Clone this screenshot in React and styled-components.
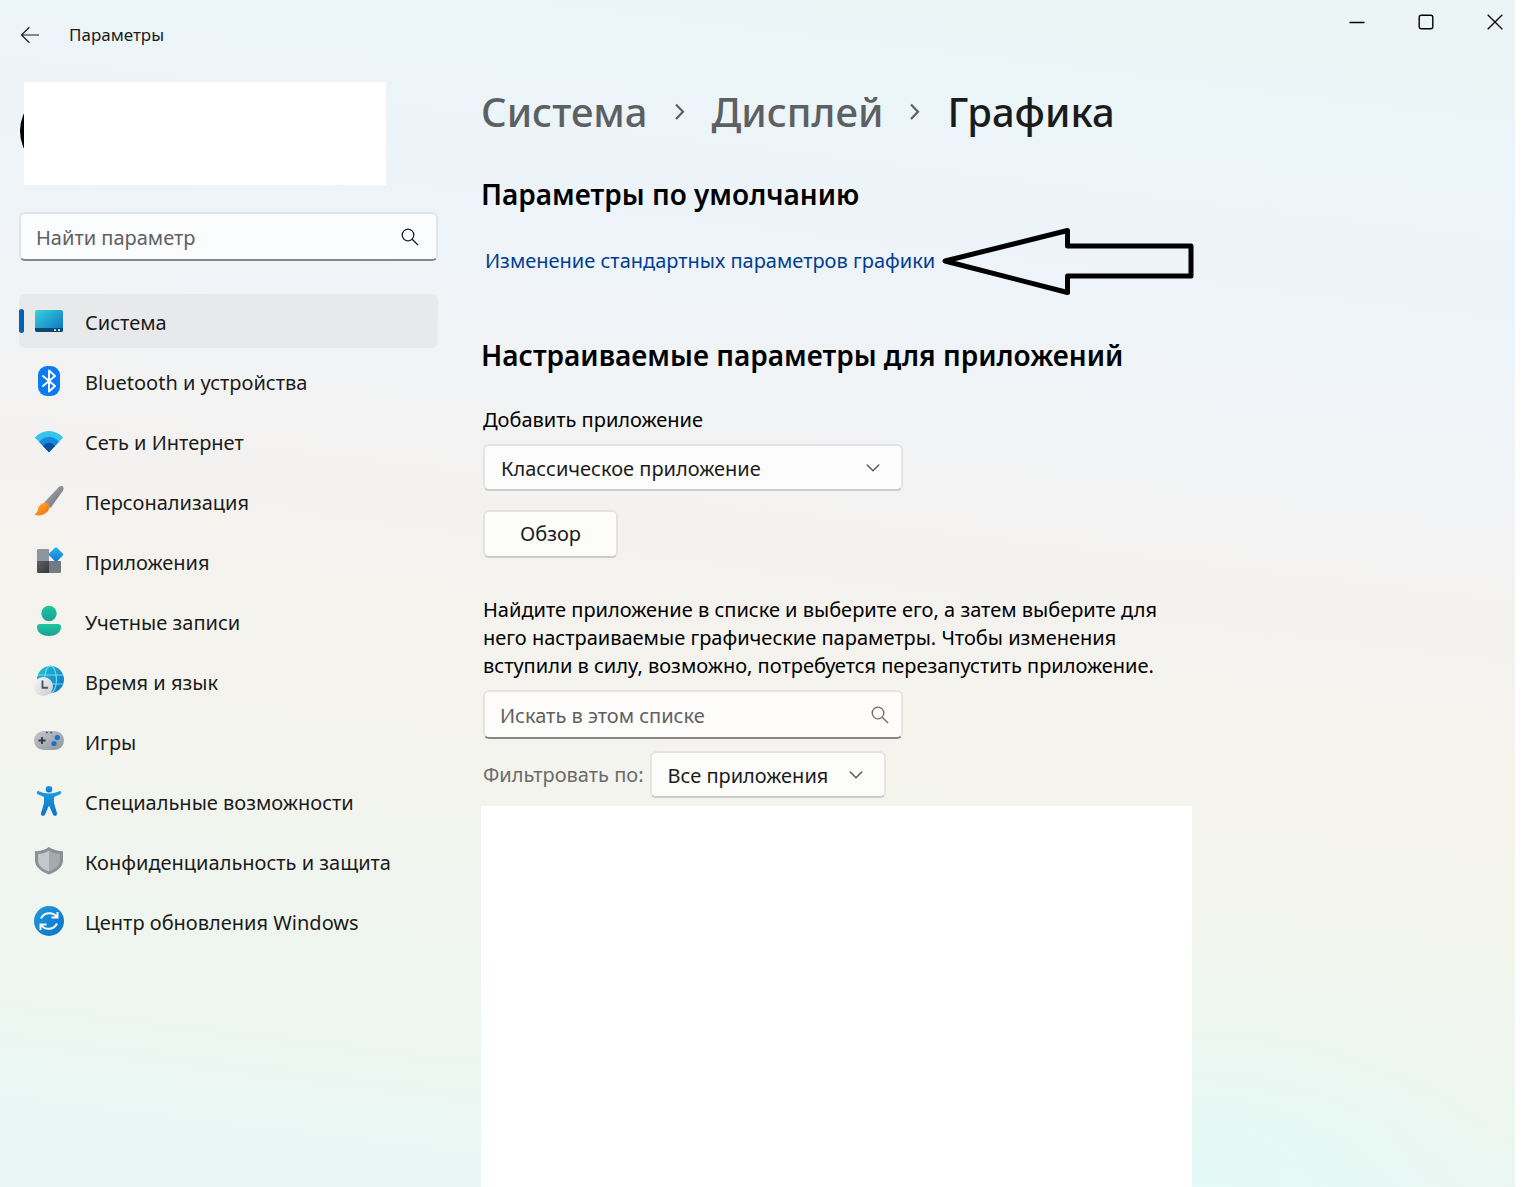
import React from "react";
import styled, { createGlobalStyle } from "styled-components";

const GlobalStyle = createGlobalStyle`
  *, *::before, *::after { box-sizing: border-box; }
  body {
    margin: 0;
    background: #fff;
    color: #1b1b1b;
    font-family: "Segoe UI", "Noto Sans", "Open Sans", sans-serif;
    font-size: 20px;
    line-height: 28px;
  }
  button, input, select { font: inherit; color: inherit; }
`;

const Window = styled.div`
  display: flex;
  flex-direction: column;
  min-height: 100vh;
  margin-right: 21px;
  background:
    radial-gradient(360px 220px at 80% 100%, rgba(224, 250, 246, 0.8), rgba(224, 250, 246, 0)),
    linear-gradient(187deg, #ebf5f6 6%, #ecf4f9 20%, #f1f3f6 34%, #f4f2f0 46%, #f5f3ed 58%, #f3f4ee 68%, #eff5ef 80%, #e8f7f4 96%);
`;

const TitleBar = styled.header`
  display: flex;
  justify-content: space-between;
  align-items: flex-start;
  height: 82px;
`;

const TitleGroup = styled.div`
  display: flex;
  align-items: center;
  gap: 21px;
  height: 70px;
  padding-left: 12px;
`;

const IconButton = styled.button`
  display: grid;
  place-items: center;
  width: ${(p) => p.$width}px;
  height: ${(p) => p.$height}px;
  padding: 0;
  border: 0;
  background: none;
  color: #1b1b1b;
`;

const AppTitle = styled.span`
  font-size: 17px;
  line-height: 24px;
`;

const WindowControls = styled.div`
  display: flex;
  margin-right: -14px;
`;

const Body = styled.div`
  display: flex;
  flex: 1;
  gap: 43px;
  padding-left: 19px;
`;

const Sidebar = styled.aside`
  display: flex;
  flex-direction: column;
  flex: 0 0 419px;
`;

const Profile = styled.div`
  position: relative;
  height: 103px;
  margin: 0 52px 27px 1px;
  padding-left: 4px;
`;

const Avatar = styled.div`
  position: absolute;
  top: 7px;
  left: 0;
  width: 84px;
  height: 84px;
  border-radius: 50%;
  background: #000;
`;

const ProfileCover = styled.div`
  position: relative;
  height: 100%;
  background: #fff;
`;

const Field = styled.div`
  position: relative;
  width: ${(p) => p.$width};
  margin: ${(p) => p.$margin || "0"};
`;

const fieldFrame = `
  display: block;
  width: 100%;
  border: 2px solid rgba(0, 0, 0, 0.06);
  border-radius: 6px;
  background: rgba(255, 255, 255, 0.75);
  background-clip: padding-box;
  outline: 0;
`;

const SearchInput = styled.input`
  ${fieldFrame}
  height: 49px;
  padding: 2px 48px 0 15px;
  border-bottom: 2px solid #868686;
  &::placeholder { color: #606060; opacity: 1; }
`;

const Select = styled.select`
  ${fieldFrame}
  appearance: none;
  height: 47px;
  padding: 2px 40px 0 16px;
  border-bottom-color: #cbcbcb;
  color: #1b1b1b;
`;

const FieldIcon = styled.span`
  position: absolute;
  top: 0;
  bottom: 0;
  right: ${(p) => p.$right}px;
  display: flex;
  align-items: center;
  color: ${(p) => p.$color};
  pointer-events: none;
`;

const Nav = styled.nav`
  display: flex;
  flex-direction: column;
  gap: 6px;
  margin-top: 33px;
`;

const NavItem = styled.a`
  display: flex;
  align-items: center;
  gap: 20px;
  height: 54px;
  padding-left: ${(p) => (p.$active ? 0 : 14)}px;
  border-radius: 6px;
  background: ${(p) => (p.$active ? "#e7e9eb" : "transparent")};
  color: #1b1b1b;
  text-decoration: none;
  &::before {
    content: "";
    display: ${(p) => (p.$active ? "block" : "none")};
    width: 5px;
    height: 24px;
    margin-right: -11px;
    border-radius: 3px;
    background: #0560b6;
  }
`;

const NavLabel = styled.span`
  padding-top: 3px;
`;

const Main = styled.main`
  display: flex;
  flex-direction: column;
  flex: 0 1 711px;
  min-width: 0;
`;

const Breadcrumbs = styled.nav`
  display: flex;
  align-items: center;
  height: 60px;
  margin-bottom: 32px;
  font-size: 40px;
  font-weight: 500;
  line-height: 60px;
  white-space: nowrap;
`;

const Crumb = styled.a`
  color: ${(p) => (p.$current ? "#1b1b1b" : "#5d6062")};
  text-decoration: none;
`;

const CrumbArrow = styled.span`
  display: grid;
  place-items: center;
  width: 64px;
  color: #5d6062;
`;

const Heading = styled.h2`
  margin: 0;
  color: #000;
  font-size: 28px;
  font-weight: 600;
  line-height: 40px;
  white-space: nowrap;
`;

const LinkRow = styled.div`
  display: flex;
  align-items: center;
  gap: 7px;
  height: 68px;
  margin: 13px 0 40px;
  padding-left: 4px;
`;

const SettingLink = styled.a`
  color: #003e92;
  text-decoration: none;
  white-space: nowrap;
`;

const Form = styled.form`
  display: flex;
  flex-direction: column;
  align-items: flex-start;
  padding: 31px 0 0 2px;
  color: #000;
`;

const BrowseButton = styled.button`
  ${fieldFrame}
  width: 135px;
  height: 48px;
  margin: 19px 0 38px;
  padding: 0;
  border-bottom-color: #cbcbcb;
  color: #1b1b1b;
`;

const Hint = styled.p`
  margin: 0 0 10px;
`;

const FilterRow = styled.div`
  display: flex;
  align-items: center;
  gap: 6px;
  margin: 12px 0 8px;
`;

const FilterLabel = styled.label`
  color: #6b6b69;
  white-space: nowrap;
`;

const AppList = styled.div`
  flex: 1;
  background: #fff;
`;

const SearchIcon = () => (
  <svg width="18" height="18" viewBox="0 0 18 18" fill="none" stroke="currentColor" strokeWidth="1.3">
    <circle cx="7" cy="7" r="5.8" />
    <path d="M11.2 11.2 17 17" />
  </svg>
);

const ChevronDown = () => (
  <svg width="14" height="8" viewBox="0 0 14 8" fill="none" stroke="currentColor" strokeWidth="1.5" strokeLinecap="round">
    <path d="M1.2 1 7 6.8 12.8 1" />
  </svg>
);

const ChevronRight = () => (
  <svg width="12" height="20" viewBox="0 0 12 20" fill="none" stroke="currentColor" strokeWidth="2.2">
    <path d="M2 2.500 9 9.700 2 17" />
  </svg>
);

const BackIcon = () => (
  <svg width="20" height="18" viewBox="0 0 20 18" fill="none" stroke="currentColor" strokeWidth="1.2">
    <path d="M19 9H1.6M9.4 1.2 1.5 9l7.9 7.8" />
  </svg>
);

const MinimizeIcon = () => (
  <svg width="16" height="16" viewBox="0 0 16 16" fill="none" stroke="#000" strokeWidth="1.5">
    <path d="M.5 8.500h15" />
  </svg>
);

const MaximizeIcon = () => (
  <svg width="16" height="16" viewBox="0 0 16 16" fill="none" stroke="#000" strokeWidth="1.4">
    <rect x="1.2" y="1.2" width="13.6" height="13.6" rx="2" />
  </svg>
);

const CloseIcon = () => (
  <svg width="16" height="16" viewBox="0 0 16 16" fill="none" stroke="#000" strokeWidth="1.3">
    <path d="m.7.7 14.6 14.6M15.3.7.7 15.3" />
  </svg>
);

const ArrowDrawing = styled.svg`
  flex: none;
`;

const PointerArrow = () => (
  <ArrowDrawing width="252" height="68" viewBox="0 0 252 68" fill="none" stroke="#000" strokeWidth="5" strokeLinejoin="round">
    <path d="M3 34 125.500 3.500V19H249V49H125.500V65.500Z" />
  </ArrowDrawing>
);

const NavSvg = ({ children }) => (
  <svg width="32" height="32" viewBox="0 0 32 32" fill="none" aria-hidden="true">
    {children}
  </svg>
);

const Gradient = ({ id, from, to, vertical }) => (
  <linearGradient id={id} x1="0" y1="0" x2={vertical ? "0" : "1"} y2="1">
    <stop stopColor={from} />
    <stop offset="1" stopColor={to} />
  </linearGradient>
);

const SystemIcon = () => (
  <NavSvg>
    <defs><Gradient id="screen" from="#36d3e0" to="#0d6fbd" /></defs>
    <rect x="2" y="5" width="28" height="22" rx="2" fill="url(#screen)" />
    <path d="M2 23h28v2a2 2 0 0 1-2 2H4a2 2 0 0 1-2-2z" fill="#0b4a70" />
    <path d="M21 24.200h2v1.800h-2zM25 24.200h2v1.800h-2z" fill="#c9eefa" />
  </NavSvg>
);

const BluetoothIcon = () => (
  <NavSvg>
    <rect x="5" y="1" width="22" height="30" rx="9" fill="#0a7bf0" />
    <path d="m10 11 12 10-6 5.500V5.500L22 11 10 21" stroke="#fff" strokeWidth="1.900" strokeLinejoin="round" strokeLinecap="round" />
  </NavSvg>
);

const WifiIcon = () => (
  <NavSvg>
    <path d="M16 27.200 1.800 12.600Q8 6 16 6t14.200 6.600z" fill="#37c3ee" />
    <path d="M16 27.200 6.200 17Q10 12 16 12t9.800 5z" fill="#1689dc" />
    <path d="m16 27.200-6-6.200q2.500-3.200 6-3.200t6 3.200z" fill="#0c4f9e" />
  </NavSvg>
);

const BrushIcon = () => (
  <NavSvg>
    <defs>
      <Gradient id="handle" from="#b1b5b9" to="#62686e" />
      <Gradient id="bristle" from="#fdb62d" to="#ef6812" />
    </defs>
    <path d="M29.800 1.500c1.200 1 .9 3 .1 4.300L17.600 23l-6.400-5.600L25.600 2.300c1.100-1.100 3.100-1.700 4.200-.8z" fill="url(#handle)" />
    <path d="M10.500 18c3-1.500 6.800 1.700 5.700 5.300C14.500 29.500 7 31.500 2.200 29.800c-.8-.3-.5-1.100.2-1.400 2.300-1 2.200-2.900 2.800-5.400.6-2.300 2.700-4.200 5.300-5z" fill="url(#bristle)" />
  </NavSvg>
);

const AppsIcon = () => (
  <NavSvg>
    <defs>
      <Gradient id="tile" from="#5c6065" to="#35383c" />
      <Gradient id="diamond" from="#2eb4f5" to="#0f76d0" />
    </defs>
    <path d="M5.500 4H16v12H4V5.500A1.500 1.500 0 0 1 5.500 4z" fill="#8e969d" />
    <path d="M4 16h12v12H5.500A1.500 1.500 0 0 1 4 26.500z" fill="url(#tile)" />
    <path d="M16 16h12v10.500a1.500 1.500 0 0 1-1.500 1.500H16z" fill="#747a80" />
    <rect x="17.500" y="4" width="11" height="11" rx="1.500" transform="rotate(45 23 9.500)" fill="url(#diamond)" />
  </NavSvg>
);

const AccountIcon = () => (
  <NavSvg>
    <defs><Gradient id="person" from="#1fc4a0" to="#17a393" vertical /></defs>
    <circle cx="16" cy="8.500" r="7.700" fill="url(#person)" />
    <path d="M7 19h18a3 3 0 0 1 3 3c0 6-6 9-12 9S4 28 4 22a3 3 0 0 1 3-3z" fill="url(#person)" />
  </NavSvg>
);

const TimeIcon = () => (
  <NavSvg>
    <defs>
      <Gradient id="globe" from="#25c5cf" to="#0a6fc6" />
      <Gradient id="clock" from="#fafafa" to="#c6c9cd" />
    </defs>
    <circle cx="17.500" cy="14.500" r="13.500" fill="url(#globe)" />
    <g stroke="#75d9ed" strokeWidth="1.200">
      <ellipse cx="17.500" cy="14.500" rx="6" ry="13.500" />
      <path d="M5 10h25M5 19h25" />
    </g>
    <circle cx="10.500" cy="21.500" r="9.500" fill="url(#clock)" />
    <path d="M9.500 15.500v7.300H15" stroke="#505357" strokeWidth="1.900" />
  </NavSvg>
);

const GamesIcon = () => (
  <NavSvg>
    <defs><Gradient id="pad" from="#c3c8cd" to="#8e959b" /></defs>
    <rect x="1" y="6" width="30" height="19" rx="9.500" fill="url(#pad)" />
    <path d="M5.500 15.500h7M9 12v7" stroke="#33373a" strokeWidth="1.800" />
    <path d="M13 7.500h1.700M17.300 7.500H19" stroke="#4b4f53" strokeWidth="1.500" />
    <circle cx="24.300" cy="12.500" r="2.600" fill="#1673c9" />
    <circle cx="21" cy="18.500" r="2.600" fill="#1673c9" />
  </NavSvg>
);

const AccessibilityIcon = () => (
  <NavSvg>
    <defs><Gradient id="figure" from="#1c9be0" to="#0f70c8" vertical /></defs>
    <circle cx="16" cy="4.300" r="3.300" fill="url(#figure)" />
    <path d="M5.800 6.200c-1.900-.6-2.900 2.200-1 3L11 12v6L8 28.200c-.6 2.500 3 3.700 4 1.300L16 20.500l4 9c1 2.400 4.600 1.200 4-1.300L21 18v-6l6.200-2.800c1.900-.8.900-3.600-1-3-7.200 2.900-13.200 2.900-20.400 0z" fill="url(#figure)" />
  </NavSvg>
);

const ShieldIcon = () => (
  <NavSvg>
    <path d="M16 2c4.500 3 9 4 14 4.200v9.300C30 22 24 26.500 16 29.500 8 26.500 2 22 2 15.500V6.200C7 6 11.500 5 16 2z" fill="#8b9095" />
    <path d="M16 5.500C12.500 7.800 9 8.700 5 9v6.500c0 5 4.500 8.500 11 11z" fill="#c3c7cb" />
    <path d="M16 5.500C19.500 7.800 23 8.700 27 9v6.500c0 5-4.500 8.500-11 11z" fill="#a5aaaf" />
  </NavSvg>
);

const UpdateIcon = () => (
  <NavSvg>
    <defs><Gradient id="update" from="#219adb" to="#0b72c9" /></defs>
    <circle cx="16" cy="16" r="15" fill="url(#update)" />
    <path d="M8 13.500c2.800-6.200 11.500-7.300 16-1.500M24.500 7v5.500h-6M24 18.500c-2.800 6.200-11.500 7.300-16 1.500M7.500 25v-5.500h6" stroke="#f2faff" strokeWidth="2" />
  </NavSvg>
);

const NAV_ITEMS = [
  { label: "Система", Icon: SystemIcon, active: true },
  { label: "Bluetooth и устройства", Icon: BluetoothIcon },
  { label: "Сеть и Интернет", Icon: WifiIcon },
  { label: "Персонализация", Icon: BrushIcon },
  { label: "Приложения", Icon: AppsIcon },
  { label: "Учетные записи", Icon: AccountIcon },
  { label: "Время и язык", Icon: TimeIcon },
  { label: "Игры", Icon: GamesIcon },
  { label: "Специальные возможности", Icon: AccessibilityIcon },
  { label: "Конфиденциальность и защита", Icon: ShieldIcon },
  { label: "Центр обновления Windows", Icon: UpdateIcon },
];

export default function App() {
  return (
    <>
      <GlobalStyle />
      <Window>
        <TitleBar>
          <TitleGroup>
            <IconButton $width={36} $height={36} aria-label="Назад"><BackIcon /></IconButton>
            <AppTitle>Параметры</AppTitle>
          </TitleGroup>
          <WindowControls>
            <IconButton $width={69} $height={44} aria-label="Свернуть"><MinimizeIcon /></IconButton>
            <IconButton $width={69} $height={44} aria-label="Развернуть"><MaximizeIcon /></IconButton>
            <IconButton $width={69} $height={44} aria-label="Закрыть"><CloseIcon /></IconButton>
          </WindowControls>
        </TitleBar>
        <Body>
          <Sidebar>
            <Profile>
              <Avatar />
              <ProfileCover />
            </Profile>
            <Field $width="auto">
              <SearchInput type="text" placeholder="Найти параметр" aria-label="Найти параметр" />
              <FieldIcon $right={19} $color="#1b1b1b"><SearchIcon /></FieldIcon>
            </Field>
            <Nav>
              {NAV_ITEMS.map(({ label, Icon, active }) => (
                <NavItem key={label} href="#" $active={active}>
                  <Icon />
                  <NavLabel>{label}</NavLabel>
                </NavItem>
              ))}
            </Nav>
          </Sidebar>
          <Main>
            <Breadcrumbs>
              <Crumb href="#">Система</Crumb>
              <CrumbArrow><ChevronRight /></CrumbArrow>
              <Crumb href="#">Дисплей</Crumb>
              <CrumbArrow><ChevronRight /></CrumbArrow>
              <Crumb href="#" $current>Графика</Crumb>
            </Breadcrumbs>
            <Heading>Параметры по умолчанию</Heading>
            <LinkRow>
              <SettingLink href="#">Изменение стандартных параметров графики</SettingLink>
              <PointerArrow />
            </LinkRow>
            <Heading>Настраиваемые параметры для приложений</Heading>
            <Form onSubmit={(e) => e.preventDefault()}>
              <label htmlFor="app-type">Добавить приложение</label>
              <Field $width="420px" $margin="10px 0 0">
                <Select id="app-type" defaultValue="classic">
                  <option value="classic">Классическое приложение</option>
                </Select>
                <FieldIcon $right={23} $color="#5c5c5c"><ChevronDown /></FieldIcon>
              </Field>
              <BrowseButton type="button">Обзор</BrowseButton>
              <Hint>
                Найдите приложение в списке и выберите его, а затем выберите для
                него настраиваемые графические параметры. Чтобы изменения
                вступили в силу, возможно, потребуется перезапустить приложение.
              </Hint>
              <Field $width="420px">
                <SearchInput type="text" placeholder="Искать в этом списке" aria-label="Искать в этом списке" />
                <FieldIcon $right={14} $color="#6b6b6b"><SearchIcon /></FieldIcon>
              </Field>
              <FilterRow>
                <FilterLabel htmlFor="filter">Фильтровать по:</FilterLabel>
                <Field $width="236px">
                  <Select id="filter" defaultValue="all">
                    <option value="all">Все приложения</option>
                  </Select>
                  <FieldIcon $right={23} $color="#5c5c5c"><ChevronDown /></FieldIcon>
                </Field>
              </FilterRow>
            </Form>
            <AppList />
          </Main>
        </Body>
      </Window>
    </>
  );
}
